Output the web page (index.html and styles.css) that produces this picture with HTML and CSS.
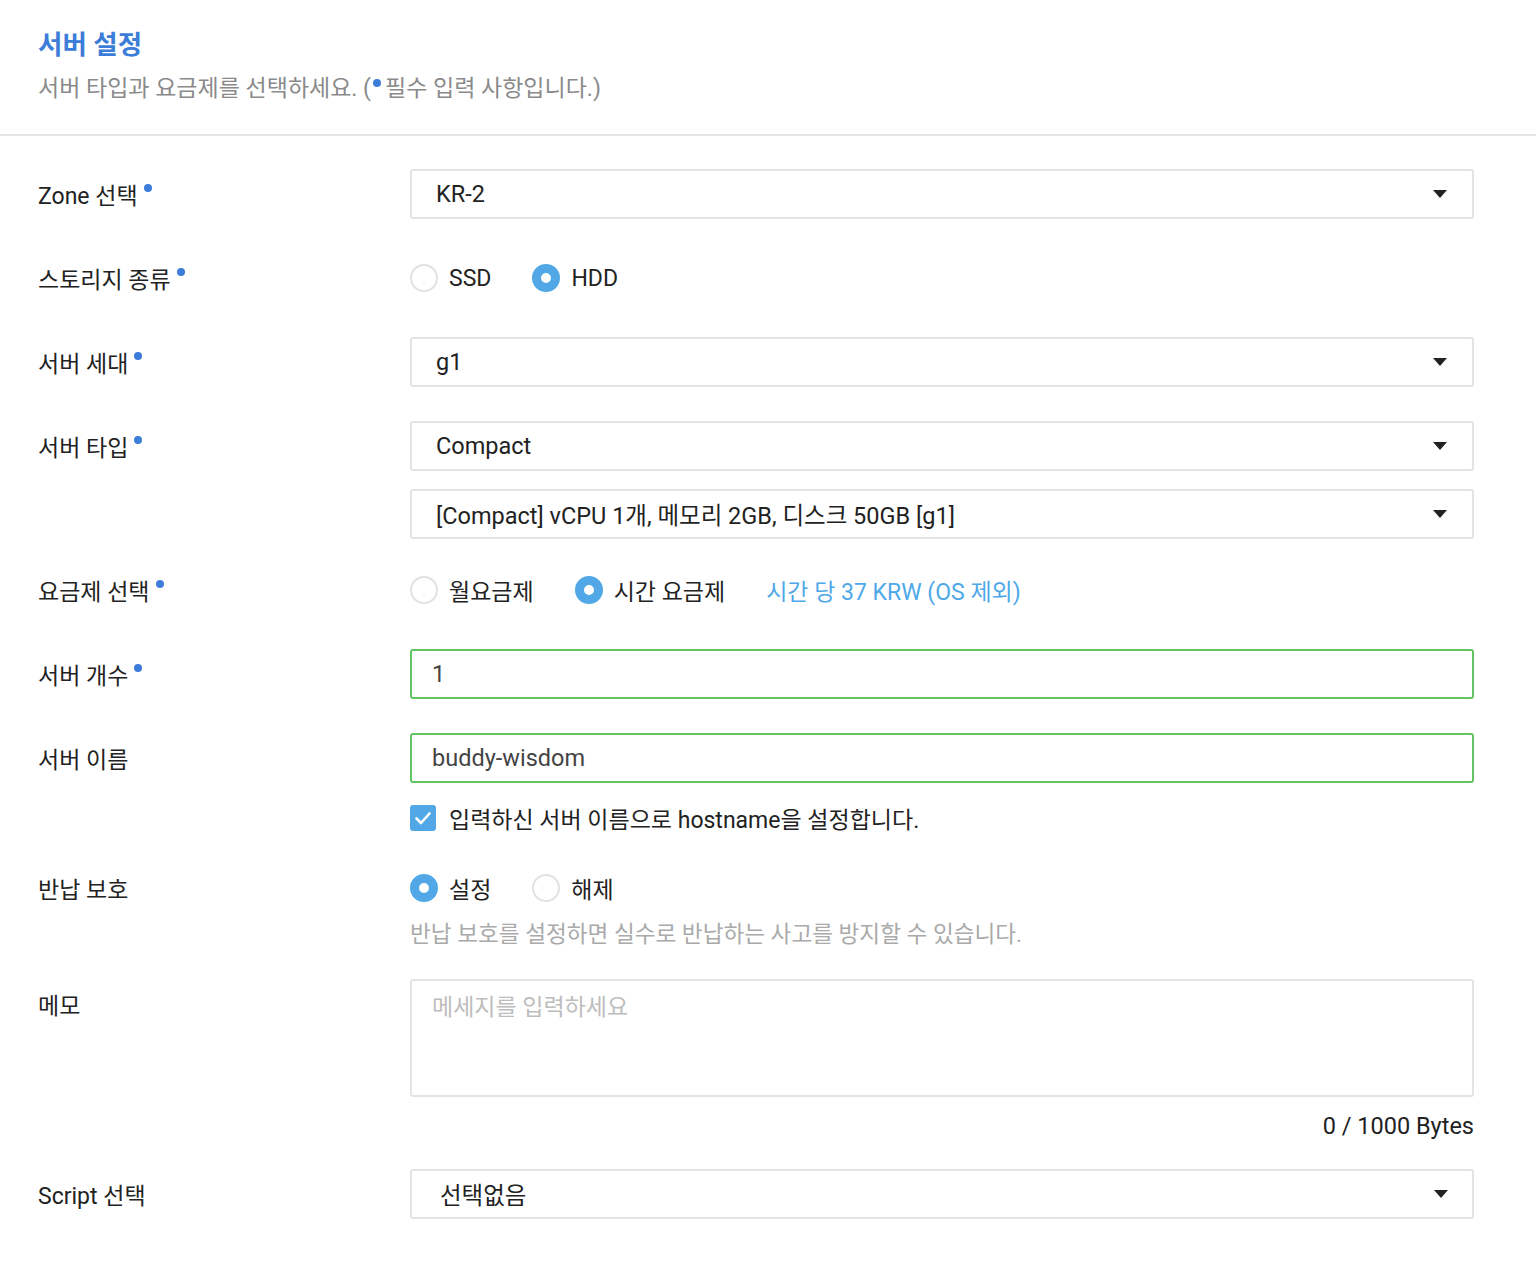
FILE: index.html
```html
<!DOCTYPE html>
<html lang="ko">
<head>
<meta charset="utf-8">
<title>서버 설정</title>
<link rel="stylesheet" href="styles.css">
</head>
<body>
<div class="page">
  <header class="head">
    <h1 class="title">서버 설정</h1>
    <p class="sub">서버 타입과 요금제를 선택하세요. (<span class="req"></span>필수 입력 사항입니다.)</p>
  </header>

  <div class="form">
    <div class="row">
      <div class="label">Zone 선택<span class="req"></span></div>
      <div class="field">
        <div class="select"><span>KR-2</span><svg class="arrow" viewBox="0 0 14 8"><path d="M0 0H14L7 8Z"/></svg></div>
      </div>
    </div>

    <div class="row">
      <div class="label">스토리지 종류<span class="req"></span></div>
      <div class="field radios">
        <label class="opt"><span class="radio"></span>SSD</label>
        <label class="opt"><span class="radio on"></span>HDD</label>
      </div>
    </div>

    <div class="row">
      <div class="label">서버 세대<span class="req"></span></div>
      <div class="field">
        <div class="select"><span>g1</span><svg class="arrow" viewBox="0 0 14 8"><path d="M0 0H14L7 8Z"/></svg></div>
      </div>
    </div>

    <div class="row row-type">
      <div class="label">서버 타입<span class="req"></span></div>
      <div class="field stack">
        <div class="select"><span>Compact</span><svg class="arrow" viewBox="0 0 14 8"><path d="M0 0H14L7 8Z"/></svg></div>
        <div class="select"><span>[Compact] vCPU 1개, 메모리 2GB, 디스크 50GB [g1]</span><svg class="arrow" viewBox="0 0 14 8"><path d="M0 0H14L7 8Z"/></svg></div>
      </div>
    </div>

    <div class="row">
      <div class="label">요금제 선택<span class="req"></span></div>
      <div class="field radios">
        <label class="opt"><span class="radio"></span>월요금제</label>
        <label class="opt"><span class="radio on"></span>시간 요금제</label>
        <span class="price">시간 당 37 KRW (OS 제외)</span>
      </div>
    </div>

    <div class="row">
      <div class="label">서버 개수<span class="req"></span></div>
      <div class="field">
        <div class="input ok">1</div>
      </div>
    </div>

    <div class="row row-name">
      <div class="label">서버 이름</div>
      <div class="field">
        <div class="input ok">buddy-wisdom</div>
        <label class="check"><span class="box"><svg viewBox="0 0 26 26"><path d="M6.5 13.5l4.5 4.5 8.5-9.5" fill="none" stroke="#fff" stroke-width="2.6" stroke-linecap="round" stroke-linejoin="round"/></svg></span>입력하신 서버 이름으로 hostname을 설정합니다.</label>
      </div>
    </div>

    <div class="row row-protect">
      <div class="label">반납 보호</div>
      <div class="field">
        <div class="radios">
          <label class="opt"><span class="radio on"></span>설정</label>
          <label class="opt"><span class="radio"></span>해제</label>
        </div>
        <p class="help">반납 보호를 설정하면 실수로 반납하는 사고를 방지할 수 있습니다.</p>
      </div>
    </div>

    <div class="row row-memo">
      <div class="label">메모</div>
      <div class="field">
        <div class="textarea"><span class="ph">메세지를 입력하세요</span></div>
        <div class="count">0 / 1000 Bytes</div>
      </div>
    </div>

    <div class="row">
      <div class="label">Script 선택</div>
      <div class="field">
        <div class="select script"><span>선택없음</span><svg class="arrow" viewBox="0 0 14 8"><path d="M0 0H14L7 8Z"/></svg></div>
      </div>
    </div>
  </div>
</div>
</body>
</html>
```

FILE: styles.css
```css
* { box-sizing: border-box; }
html, body { margin: 0; padding: 0; background: #fff; }
body {
  font-family: Roboto, "Noto Sans CJK KR", sans-serif;
  font-size: 23.5px;
  color: #222;
}
.page { width: 1536px; }

.head {
  padding: 29px 62px 30px 38px;
  border-bottom: 2px solid #e6e6e6;
}
.title {
  margin: 0 0 13px;
  font-size: 26.5px;
  line-height: 32px;
  font-weight: 700;
  color: #3b7dd8;
}
.sub {
  margin: 0;
  font-size: 23px;
  line-height: 30px;
  color: #8a8a8a;
}
.req {
  display: inline-block;
  width: 8px;
  height: 8px;
  border-radius: 50%;
  background: #3b7dd8;
  margin-left: 6px;
  vertical-align: 12px;
}
.sub .req { margin: 0 4px 0 2px; vertical-align: 9px; }

.form { padding: 33px 62px 40px 38px; }
.row {
  display: grid;
  grid-template-columns: 372px 1064px;
  margin-bottom: 34px;
}
.label {
  height: 50px;
  line-height: 44px;
  padding-top: 6px;
  font-size: 23px;
  color: #222;
  white-space: nowrap;
}
.field { min-width: 0; }
.stack { display: flex; flex-direction: column; gap: 18px; }
.row-type { margin-bottom: 26px; }

.select {
  height: 50px;
  border: 2px solid #e4e4e4;
  border-radius: 3px;
  display: flex;
  align-items: center;
  justify-content: space-between;
  padding: 0 25px 0 24px;
  color: #222;
}
.select.script { padding-left: 28px; padding-right: 24px; }
.arrow { width: 14px; height: 8px; fill: #222; flex: none; }

.radios {
  display: flex;
  align-items: center;
  height: 50px;
  font-size: 23px;
}
.opt {
  display: flex;
  align-items: center;
  gap: 11px;
  margin-right: 41px;
  color: #222;
}
.radio {
  width: 28px;
  height: 28px;
  border-radius: 50%;
  border: 2px solid #e2e2e2;
  background: #fff;
  flex: none;
}
.radio.on {
  border: 9px solid #52a8e6;
  background: #fff;
}
.price { color: #4ea8e8; margin-left: 0; }

.input {
  height: 50px;
  border: 2px solid #e4e4e4;
  border-radius: 3px;
  display: flex;
  align-items: center;
  padding: 0 20px;
  color: #444;
}
.input.ok { border-color: #62c462; }

.row-name { margin-bottom: 32px; }
.check {
  display: flex;
  align-items: center;
  gap: 13px;
  margin-top: 22px;
  height: 26px;
  font-size: 23px;
  color: #222;
}
.box {
  width: 26px;
  height: 26px;
  border-radius: 3px;
  background: #52a8e6;
  flex: none;
  display: flex;
}
.box svg { width: 26px; height: 26px; }

.row-protect { margin-bottom: 29px; }
.help {
  margin: 7px 0 0;
  font-size: 22.6px;
  line-height: 30px;
  color: #aaaaaa;
}

.textarea {
  height: 118px;
  border: 2px solid #e4e4e4;
  border-radius: 3px;
  padding: 13px 20px;
  line-height: 28px;
  font-size: 23px;
}
.ph { color: #bdbdbd; }
.count {
  margin-top: 14px;
  line-height: 30px;
  text-align: right;
  color: #222;
}
.row-memo { margin-bottom: 28px; }
```
